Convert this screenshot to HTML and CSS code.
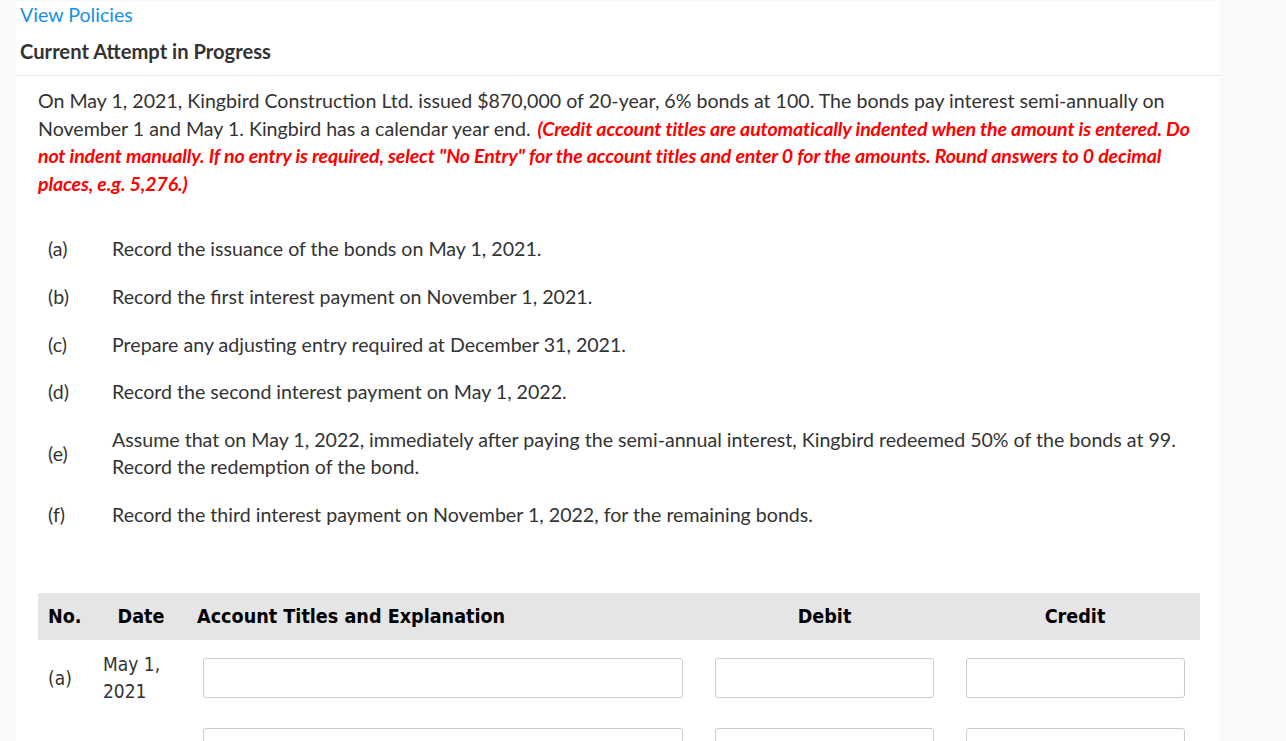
FILE: index.html
```html
<!DOCTYPE html>
<html lang="en">
<head>
<meta charset="utf-8">
<title>Current Attempt in Progress</title>
<link rel="stylesheet" href="styles.css">
</head>
<body>
<div class="page">
  <div class="top">
    <a class="policies" href="#">View Policies</a>
    <h2 class="attempt">Current Attempt in Progress</h2>
  </div>
  <div class="question">
    <p class="intro">On May 1, 2021, Kingbird Construction Ltd. issued $870,000 of 20-year, 6% bonds at 100. The bonds pay interest semi-annually on November 1 and May 1. Kingbird has a calendar year end. <em class="warn">(Credit account titles are automatically indented when the amount is entered. Do not indent manually. If no entry is required, select "No Entry" for the account titles and enter 0 for the amounts. Round answers to 0 decimal places, e.g. 5,276.)</em></p>
    <ul class="parts">
      <li class="part"><span class="lbl">(a)</span><span class="txt">Record the issuance of the bonds on May 1, 2021.</span></li>
      <li class="part"><span class="lbl">(b)</span><span class="txt">Record the first interest payment on November 1, 2021.</span></li>
      <li class="part"><span class="lbl">(c)</span><span class="txt">Prepare any adjusting entry required at December 31, 2021.</span></li>
      <li class="part"><span class="lbl">(d)</span><span class="txt">Record the second interest payment on May 1, 2022.</span></li>
      <li class="part"><span class="lbl">(e)</span><span class="txt">Assume that on May 1, 2022, immediately after paying the semi-annual interest, Kingbird redeemed 50% of the bonds at 99.<br>Record the redemption of the bond.</span></li>
      <li class="part"><span class="lbl">(f)</span><span class="txt">Record the third interest payment on November 1, 2022, for the remaining bonds.</span></li>
    </ul>
    <div class="journal">
      <div class="jhead">
        <div class="h-no">No.</div>
        <div class="h-date">Date</div>
        <div class="h-acct">Account Titles and Explanation</div>
        <div class="h-amt">Debit</div>
        <div class="h-amt">Credit</div>
      </div>
      <div class="jrow">
        <div class="c-no">(a)</div>
        <div class="c-date">May 1,<br>2021</div>
        <div class="c-acct"><input class="field" type="text"></div>
        <div class="c-dr"><input class="field" type="text"></div>
        <div class="c-cr"><input class="field" type="text"></div>
      </div>
      <div class="jrow">
        <div class="c-no"></div>
        <div class="c-date"></div>
        <div class="c-acct"><input class="field" type="text"></div>
        <div class="c-dr"><input class="field" type="text"></div>
        <div class="c-cr"><input class="field" type="text"></div>
      </div>
    </div>
  </div>
</div>
</body>
</html>
```

FILE: styles.css
```css
* { box-sizing: border-box; }
html, body { margin: 0; padding: 0; }
body {
  background: #f9f9f9;
  font-family: Lato, "Open Sans", sans-serif;
  font-size: 19.6px;
  color: #333;
  height: 741px;
  overflow: hidden;
}
.page {
  margin: 1px 0 0 16px;
  width: 1204px;
  height: 740px;
  overflow: hidden;
  background: #fff;
}
.top {
  padding: 0 4px 10px;
  border-bottom: 1px solid #e8e8e8;
}
.policies {
  display: block;
  color: #1a8fe6;
  text-decoration: none;
  line-height: 27px;
}
.attempt {
  margin: 10px 0 0;
  font-size: 20.2px;
  font-weight: 700;
  line-height: 27px;
  color: #333;
}
.question {
  padding: 11px 20px 0 22px;
}
.intro {
  margin: 0;
  line-height: 27.6px;
}
.warn {
  color: #ff0000;
  font-weight: 700;
  font-style: italic;
  letter-spacing: -0.15px;
  padding-left: 2px;
}
.parts {
  list-style: none;
  margin: 38px 0 0;
  padding: 0;
  display: flex;
  flex-direction: column;
  gap: 20px;
}
.part {
  display: flex;
  align-items: center;
  line-height: 27.6px;
}
.lbl {
  width: 74px;
  flex: none;
  padding-left: 10px;
}
.txt { flex: 1; }
.journal {
  margin-top: 64px;
  font-family: "DejaVu Sans Condensed", "DejaVu Sans", sans-serif;
}
.jhead, .jrow {
  display: grid;
  grid-template-columns: 57px 92px 512px 251px 250px;
  align-items: center;
}
.jhead {
  height: 47px;
  background: #e5e5e5;
  color: #000;
  font-weight: 700;
  font-size: 19.6px;
}
.h-no, .h-acct { padding-left: 10px; }
.h-date, .h-amt { text-align: center; }
.jrow {
  padding-top: 11px;
  padding-bottom: 12px;
  color: #333;
  font-size: 19px;
}
.c-no { padding-left: 10px; }
.c-date { padding-left: 8px; line-height: 27px; }
.c-acct, .c-dr { padding: 0 16px; }
.c-cr { padding: 0 15px 0 16px; }
.field {
  display: block;
  width: 100%;
  height: 40px;
  border: 1px solid #ccc;
  border-radius: 3px;
  background: #fff;
  font: inherit;
}
```
